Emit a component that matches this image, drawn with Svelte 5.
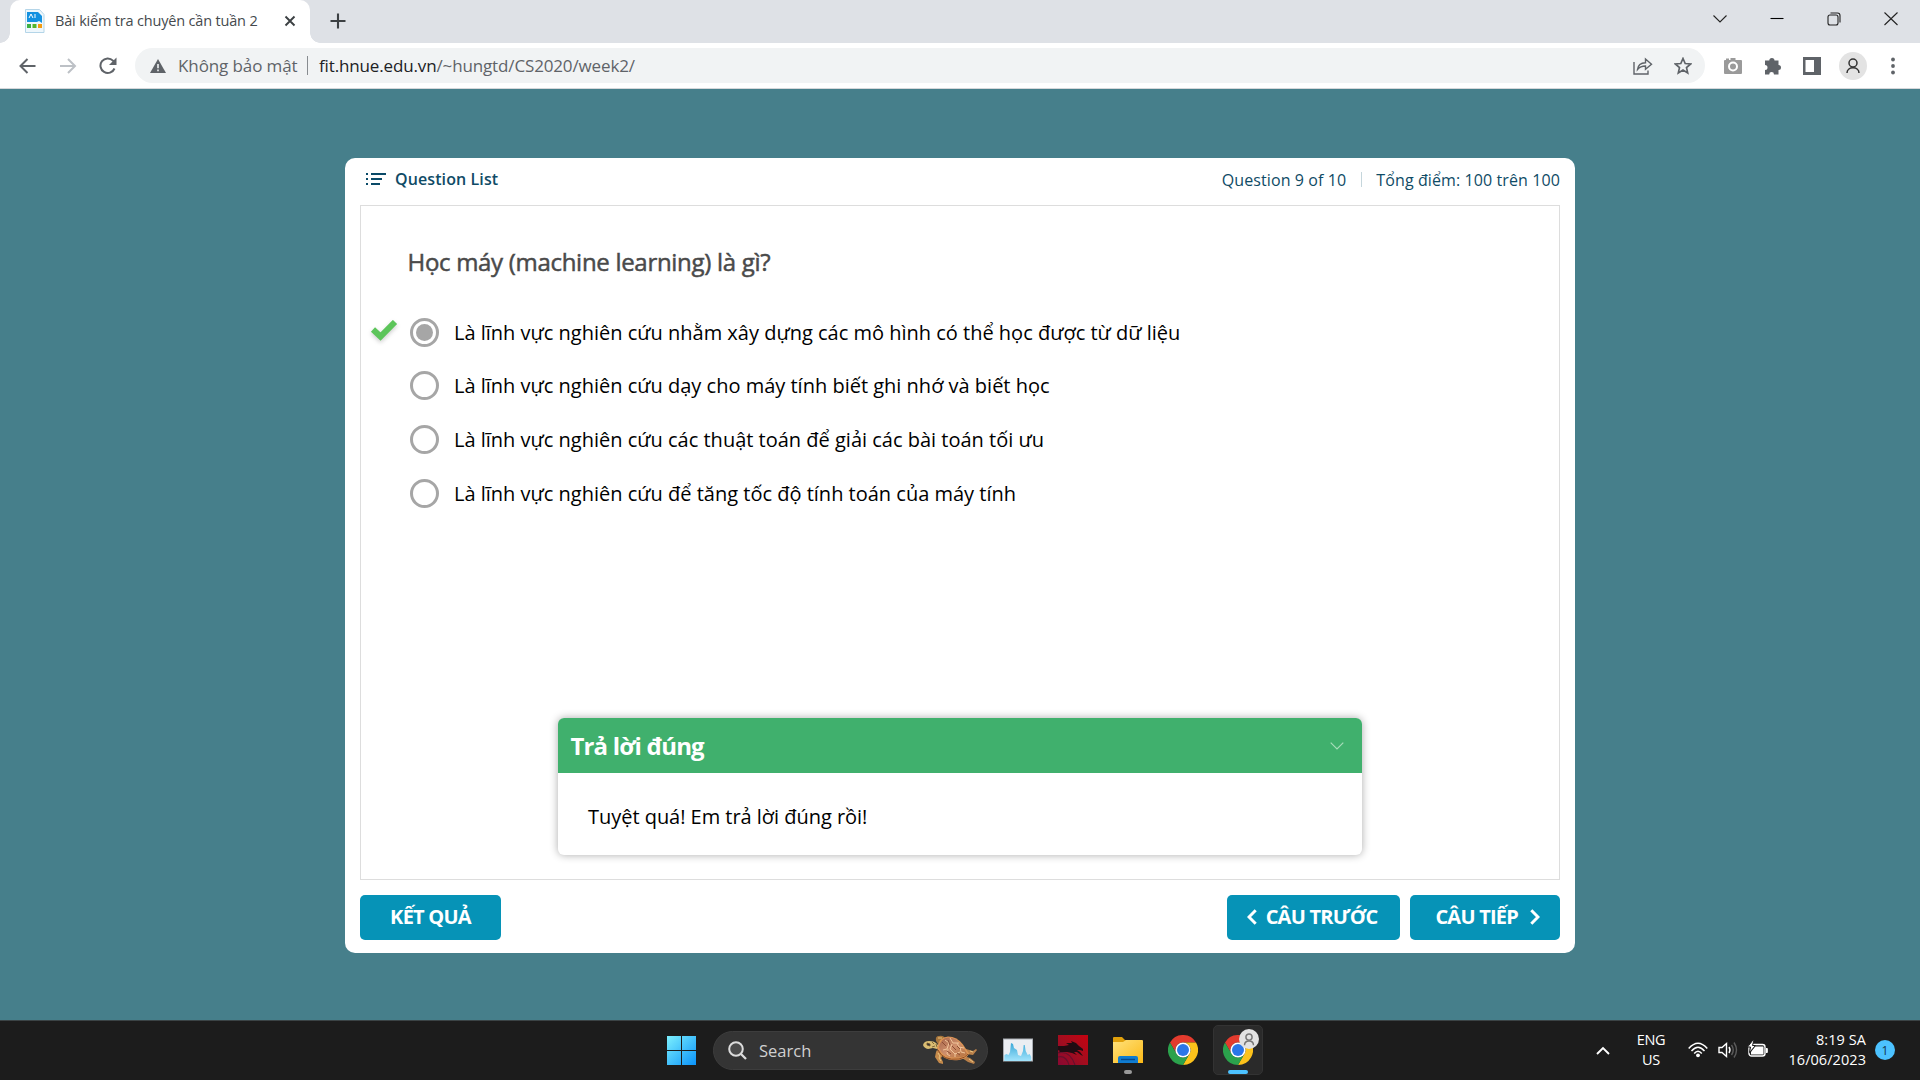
<script>
  const answers = [
    { text: 'Là lĩnh vực nghiên cứu nhằm xây dựng các mô hình có thể học được từ dữ liệu', selected: true },
    { text: 'Là lĩnh vực nghiên cứu dạy cho máy tính biết ghi nhớ và biết học', selected: false },
    { text: 'Là lĩnh vực nghiên cứu các thuật toán để giải các bài toán tối ưu', selected: false },
    { text: 'Là lĩnh vực nghiên cứu để tăng tốc độ tính toán của máy tính', selected: false }
  ];
</script>

{#snippet chrome()}
  <svg class="app-icon" width="30" height="30" viewBox="0 0 30 30">
    <path d="M2 7.5A15 15 0 0 1 28 7.5L15 7.5A7.5 7.5 0 0 0 8.5 18.75Z" fill="#e33b2e" />
    <path d="M28 7.5A15 15 0 0 1 15 30L21.5 18.75A7.5 7.5 0 0 0 15 7.5Z" fill="#fcc21b" />
    <path d="M15 30A15 15 0 0 1 2 7.5L8.5 18.75A7.5 7.5 0 0 0 21.5 18.75Z" fill="#2ba24c" />
    <circle cx="15" cy="15" r="7.6" fill="#fff" />
    <circle cx="15" cy="15" r="6" fill="#2a76e8" />
  </svg>
{/snippet}

<div class="screen">
  <header class="tabs">
    <div class="tab">
      <svg class="favicon" width="20" height="24" viewBox="0 0 20 24">
        <path d="M.5.5h14l4.500 5v18H.5z" fill="#eef7fc" stroke="#b4d5e8" />
        <path d="M2 3h11l4 4v7l-3-2-2 1H2z" fill="#1491e0" />
        <path d="M4 9l2-4 2 4M10 5v4" stroke="#fff" fill="none" />
        <path d="M2 15h4v4H2z" fill="#3cb043" />
        <path d="M7.500 15h4v4h-4z" fill="#55b52c" />
        <path d="M13 15h4v4h-4z" fill="#f39c12" />
      </svg>
      <span class="tab-title">Bài kiểm tra chuyên cần tuần 2</span>
      <svg class="tab-close" width="12" height="12" viewBox="0 0 12 12"><path d="M1.5 1.5l9 9M10.5 1.5l-9 9" stroke="#3c4043" stroke-width="1.9" /></svg>
    </div>
    <svg class="plus" width="16" height="16" viewBox="0 0 16 16"><path d="M8 .5v15M.5 8h15" stroke="#3c4043" stroke-width="2.1" /></svg>
    <div class="window-controls">
      <svg width="14" height="14" viewBox="0 0 14 14"><path d="M.5 3.5L7 10l6.5-6.5" /></svg>
      <svg width="14" height="14" viewBox="0 0 14 14"><path d="M.5 6.500h13" stroke="#000" /></svg>
      <svg width="14" height="14" viewBox="0 0 14 14"><rect x="1" y="3" width="10" height="10" rx="2" /><path d="M3.5 1h7Q13 1 13 3.5v7" /></svg>
      <svg width="14" height="14" viewBox="0 0 14 14"><path d="M.5 .5l13 12.500M13.500 .5l-13 12.500" /></svg>
    </div>
  </header>

  <div class="toolbar">
    <svg class="nav" width="18" height="16" viewBox="0 0 18 16"><path d="M16.500 8H2M8.500 1L1.500 8l7 7" stroke="#5f6368" /></svg>
    <svg class="nav" width="18" height="16" viewBox="0 0 18 16"><path d="M1 8h14.500M9 1l7 7-7 7" stroke="#bdc1c6" /></svg>
    <svg class="nav" width="18" height="18" viewBox="0 0 18 18"><path d="M15.500 11.500A7.300 7.300 0 1 1 14 3.600L16 6" stroke="#5f6368" /><path d="M17.500.5V8H10z" fill="#5f6368" stroke="none" /></svg>
    <div class="omnibox">
      <svg class="warn" width="16" height="14" viewBox="0 0 16 14"><path d="M8 0l8 14H0z" fill="#5f6368" /><path d="M8 5v4.200M8 10.500v1.700" stroke="#f1f3f4" stroke-width="1.600" /></svg>
      <span class="insecure">Không bảo mật</span>
      <span class="divider"></span>
      <span class="url"><b>fit.hnue.edu.vn</b>/~hungtd/CS2020/week2/</span>
      <svg class="share" width="20" height="18" viewBox="0 0 20 18"><path d="M1 5v12h14v-3.500M4.500 12.500C5 8 8 5.800 12.500 5.700V2L18.500 7.200l-6 5V9C9 9 6.500 10 4.500 12.500z" /></svg>
      <svg width="18" height="18" viewBox="0 0 18 18"><path d="M9 1.500l2.200 5 5.400.5-4.100 3.600 1.200 5.300L9 13.100l-4.700 2.800 1.200-5.300L1.400 7l5.400-.5z" stroke-width="1.700" /></svg>
    </div>
    <div class="extensions">
      <svg width="20" height="18" viewBox="0 0 20 18"><path d="M2 3h1V1.500h3V3h1.500V1h5v2H18q1 0 1 1v12q0 1-1 1H2q-1 0-1-1V4q0-1 1-1z" fill="#9a9a9a" /><circle cx="10" cy="9.500" r="4" fill="#9a9a9a" stroke="#fff" stroke-width="2" /></svg>
      <svg width="18" height="18" viewBox="0 0 18 18"><path d="M1 3.500h4.300a2.600 2.600 0 0 1 5.200 0H14.500V8a2.500 2.500 0 0 1 0 5v4.500H10a2.400 2.400 0 0 0-4.800 0H1V13a2.500 2.500 0 0 0 0-5z" fill="#5f6368" /></svg>
      <svg width="18" height="18" viewBox="0 0 18 18"><path d="M0 0h18v18H0zM2.500 3v12H11V3z" fill="#5f6368" fill-rule="evenodd" /></svg>
      <span class="avatar"><svg width="14" height="16" viewBox="0 0 14 16"><circle cx="7" cy="5" r="4" /><path d="M1 15c0-7 12-7 12 0" /></svg></span>
      <svg class="dots" width="4" height="18" viewBox="0 0 4 18"><circle cx="2" cy="2.500" r="1.900" /><circle cx="2" cy="9" r="1.900" /><circle cx="2" cy="15.500" r="1.900" /></svg>
    </div>
  </div>

  <main>
    <section class="quiz">
      <div class="quiz-head">
        <svg width="20" height="12" viewBox="0 0 20 12"><path d="M0 1h2M5 1h15M0 6h2M5 6h11M0 11h2M5 11h9" stroke="#0a4a68" stroke-width="2" /></svg>
        <span class="list-label">Question List</span>
        <span class="progress">Question 9 of 10</span>
        <span class="rule"></span>
        <span class="score">Tổng điểm: 100 trên 100</span>
      </div>
      <div class="slide">
        <h1>Học máy (machine learning) là gì?</h1>
        <div class="answers">
          {#each answers as answer}
            <div class="answer">
              <span class="mark">
                {#if answer.selected}
                  <svg width="28" height="22" viewBox="0 0 28 22"><path d="M3 9.500l7.500 7L25 2" fill="none" stroke="#5cc55a" stroke-width="6" /></svg>
                {/if}
              </span>
              <span class="radio" class:selected={answer.selected}></span>
              <span class="answer-text">{answer.text}</span>
            </div>
          {/each}
        </div>
        <div class="feedback">
          <div class="feedback-head">
            <span>Trả lời đúng</span>
            <svg width="14" height="8" viewBox="0 0 14 8"><path d="M.7 .7L7 7l6.300-6.300" fill="none" stroke="#a6dcb9" stroke-width="1.200" /></svg>
          </div>
          <p>Tuyệt quá! Em trả lời đúng rồi!</p>
        </div>
      </div>
      <div class="actions">
        <button class="result">KẾT QUẢ</button>
        <button class="prev"><svg width="10" height="16" viewBox="0 0 10 16"><path d="M8.700 1.300L2 8l6.700 6.700" /></svg><span>CÂU TRƯỚC</span></button>
        <button class="next"><span>CÂU TIẾP</span><svg width="10" height="16" viewBox="0 0 10 16"><path d="M1.300 1.300L8 8l-6.700 6.700" /></svg></button>
      </div>
    </section>
  </main>

  <footer class="taskbar">
    <div class="apps">
      <svg class="start" width="29" height="29" viewBox="0 0 29 29">
        <defs><linearGradient id="win" gradientUnits="userSpaceOnUse" x1="0" y1="0" x2="29" y2="29"><stop offset="0" stop-color="#7df0fd" /><stop offset="1" stop-color="#0a93fa" /></linearGradient></defs>
        <path d="M0 0h14v14H0zM15 0h14v14H15zM0 15h14v14H0zM15 15h14v14H15z" fill="url(#win)" />
      </svg>
      <div class="search">
        <svg width="19" height="19" viewBox="0 0 19 19"><circle cx="8" cy="8" r="6.800" fill="#4b4b4b" stroke="#dcdcdc" stroke-width="2" /><path d="M13 13l5 5" stroke="#dcdcdc" stroke-width="2.300" /></svg>
        <span>Search</span>
        <svg class="turtle" width="54" height="30" viewBox="0 0 54 30">
          <defs><linearGradient id="shell" x1="0" y1="0" x2="1" y2="1"><stop offset="0" stop-color="#a5654a" /><stop offset=".5" stop-color="#cf8f6c" /><stop offset="1" stop-color="#b5723c" /></linearGradient></defs>
          <path d="M13 6Q12 1 16 1q4-1 6 2l-4 4-3 2z" fill="#a8763c" />
          <path d="M14 15l6 5-2 3 2 4 0 2-4-1-4-6 1-5z" fill="#c58a4b" />
          <path d="M43 14l7 2 3-2 1 1-4 5-7-1zM41 21l6 2 5 4-1 2-6-2-6-4z" fill="#b9804a" />
          <path d="M0 10Q1 6 6 6q5 0 7 2l3 3-2 3-4-1-5 1Q1 13 0 10z" fill="#d9bd73" />
          <path d="M4 8l3 1v2l-3-1zM9 7l2 2M9 12l3-1M13 9l1 3" fill="#2d3038" stroke="#6b5128" stroke-width=".8" />
          <path d="M14 13Q16 2 25 1.500q9 0 15 8 4 6 6 9-2 5-10 6.500-17 2-22-12z" fill="#dd9555" />
          <path d="M16 12Q18 3 25 2.500q9 0 14 8l5 8q-3 4-9 4-16 1-19-10.500z" fill="url(#shell)" />
          <path d="M22 5l4 3-2 6-4 1M27 3l3 5 6 0M29 9l-2 5 5 5 5-2M34 8l2 4 5 1M25 14l-1 5 3 2M37 12l1 5 4 1M32 18v4" fill="none" stroke="#f0c499" stroke-width="1" />
          <path d="M19 7l4 4M25 5l2 5M29 11l4 4M34 11l3 3M24 16l4 3M34 18l3 2" stroke="#8c4d34" stroke-width="1" />
          <path d="M15 15q5 11 21 9 6-1 9-5" fill="none" stroke="#914e24" stroke-width="1" />
          <path d="M15 18l2 3-1 2 2 3M47 16l3 1M46 24l4 3M15 3l4 0" stroke="#eccb84" stroke-width=".9" fill="none" />
        </svg>
      </div>
      <svg class="app-icon monitor" width="30" height="24" viewBox="0 0 30 24">
        <defs><linearGradient id="wave" x1="0" y1="0" x2="0" y2="1"><stop offset="0" stop-color="#3ba9d8" /><stop offset="1" stop-color="#a3e4fc" /></linearGradient></defs>
        <rect x=".5" y="1" width="29" height="22" fill="#ebeef2" stroke="#a9adb3" />
        <path d="M1.500 17l2-1 2 1L7 14l1-9 2 1 1 4 3 2 1 5 3 1 2-5 .7-6h1l1 6 2 4 2-1 1.500 3v4h-27z" fill="url(#wave)" />
      </svg>
      <svg class="app-icon" width="30" height="30" viewBox="0 0 30 30">
        <defs><linearGradient id="red" x1="0" y1="1" x2="1" y2="0"><stop offset="0" stop-color="#870832" /><stop offset=".5" stop-color="#a40d1e" /><stop offset="1" stop-color="#c50210" /></linearGradient></defs>
        <path d="M0 0h30v30H0z" fill="url(#red)" />
        <path d="M0 11l6 0 5-1-3-2 6 0-1-2 5 2 3 3 4 3 0 2-3-1-3 0 3 2 3 4-2-1-4-3-3 0 3 3-5-2-5-1-4 0-5 1 2-2-2-1z" fill="#200c12" />
        <path d="M0 18q12-3 17 12M0 22q8-2 11 8" fill="none" stroke="#64112d" stroke-width="1.200" />
      </svg>
      <div class="app">
        <svg class="app-icon" width="30" height="28" viewBox="0 0 30 28">
          <defs><linearGradient id="folder" x1="0" y1="0" x2="1" y2="1"><stop offset="0" stop-color="#ffe27c" /><stop offset="1" stop-color="#fcb916" /></linearGradient></defs>
          <path d="M0 2q0-1 1-1h8l3 3h17v8H0z" fill="#e0a00b" />
          <path d="M0 6h10l3-2h16q1 0 1 1v22H0z" fill="url(#folder)" />
          <path d="M5 27v-5q0-2 2-2h16q2 0 2 2v5z" fill="#107cd0" />
          <path d="M8 23.500h14" stroke="#07498c" stroke-width="1.400" />
        </svg>
        <span class="indicator"></span>
      </div>
      {@render chrome()}
      <div class="app active">
        {@render chrome()}
        <span class="profile"><svg width="12" height="13" viewBox="0 0 14 16"><circle cx="7" cy="5" r="3.800" /><path d="M1.500 15c0-7 11-7 11 0" /></svg></span>
        <span class="indicator"></span>
      </div>
    </div>
    <div class="tray">
      <svg class="up" width="14" height="9" viewBox="0 0 14 9"><path d="M1 8l6-6 6 6" fill="none" stroke="#fff" stroke-width="1.900" /></svg>
      <div class="lang"><span>ENG</span><span>US</span></div>
      <svg class="wifi" width="20" height="16" viewBox="0 0 20 16"><g fill="none" stroke="#fff" stroke-width="1.500"><path d="M.7 6.500Q10-4 19.300 6.500" /><path d="M3.500 9Q10 1.300 16.500 9" /><path d="M6.200 11.500Q10 7 13.800 11.500" /></g><circle cx="10" cy="13.300" r="1.900" fill="#fff" /></svg>
      <svg class="volume" width="20" height="18" viewBox="0 0 20 18"><g fill="none" stroke="#fff" stroke-width="1.400"><path d="M1 6.500h3L8.500 2.500v13L4 11.500H1z" /><path d="M11 6q2 3 0 6" /><path d="M13.500 4q3.500 5 0 10M16 1.500q5 7.500 0 15" stroke="#5c5c5c" /></g></svg>
      <svg class="battery" width="20" height="18" viewBox="0 0 20 18"><rect x="1" y="3.500" width="16" height="11.500" rx="2.500" fill="none" stroke="#fff" stroke-width="1.400" /><path d="M7 5.500h8.500v8H3V11z" fill="#fff" /><path d="M18 7.500h1.300v4H18" stroke="#fff" fill="#fff" /><path d="M5-1L-.5 6h3l-1 5.500 6-7H4.500l1.500-5.500z" fill="#fff" stroke="#1c1c1c" stroke-width="1" /></svg>
      <div class="clock"><span>8:19 SA</span><span>16/06/2023</span></div>
      <span class="count">1</span>
    </div>
  </footer>
</div>

<style>
  :global(body) { margin: 0; }
  .screen { width: 1920px; height: 1080px; display: flex; flex-direction: column; overflow: hidden; font-family: "Open Sans", "Noto Sans", sans-serif; background: #467f8b; box-sizing: border-box; }
  .screen *, .screen *::before { box-sizing: border-box; }
  svg { display: block; flex: none; }
  span { white-space: nowrap; }

  .tabs { height: 43px; background: #dee1e6; display: flex; align-items: center; padding-left: 10px; flex: none; }
  .tab { width: 300px; height: 43px; background: #fff; border-radius: 10px 10px 0 0; display: flex; align-items: center; padding: 0 14px 2px 15px; position: relative; }
  .tab::before { content: ""; position: absolute; left: -10px; right: -10px; bottom: 0; height: 10px; background: radial-gradient(circle at 0 0, #0000 9.500px, #fff 10px) left / 10px 10px no-repeat, radial-gradient(circle at 100% 0, #0000 9.500px, #fff 10px) right / 10px 10px no-repeat; }
  .favicon { margin-right: 10px; }
  .tab-title { font-size: 14.500px; width: 203px; letter-spacing: -.18px; color: #45494d; }
  .tab-close { margin-left: auto; }
  .plus { margin-left: 19.500px; margin-bottom: 1px; }
  .window-controls { margin-left: auto; margin-bottom: 6px; padding-right: 22px; display: flex; gap: 43px; }
  .window-controls svg { fill: none; stroke: #222; stroke-width: 1.100; }

  .toolbar { height: 46px; background: #fff; border-bottom: 1px solid #d5d7da; display: flex; align-items: center; flex: none; padding-left: 19px; }
  .nav { margin-right: 22px; fill: none; stroke-width: 2; }
  .omnibox { width: 1570px; height: 35px; border-radius: 18px; background: #f1f3f4; display: flex; align-items: center; padding: 0 13px 0 15px; color: #5f6368; font-size: 17px; margin-left: -4px; }
  .insecure { margin-left: 12px; width: 120px; letter-spacing: -.1px; }
  .divider { width: 1px; height: 19px; background: #888c90; margin: 0 11px 0 9px; }
  .url { letter-spacing: -.14px; }
  .url b { font-weight: 400; color: #202124; }
  .omnibox .share, .omnibox .share + svg { fill: none; stroke: #5f6368; }
  .share { margin-left: auto; margin-right: 21px; stroke-width: 1.400; }
  .extensions { display: flex; align-items: center; padding-left: 17.500px; }
  .extensions > * { margin-right: 21px; }
  .avatar { width: 28px; height: 28px; border-radius: 50%; background: #e3e3e3; display: grid; place-items: center; margin-left: -2.500px; }
  .avatar svg { fill: none; stroke: #333; stroke-width: 1.500; }
  .dots { fill: #5f6368; margin-left: 2.500px; }

  main { flex: 1; min-height: 0; padding: 69px 345px 0; }
  .quiz { width: 1230px; height: 795px; background: #fff; border-radius: 10px; padding: 0 15px; }
  .quiz-head { height: 47px; display: flex; align-items: center; color: #0f4b66; padding: 0 0 5px 6px; font-size: 16px; }
  .list-label { font-weight: 600; margin-left: 9px; letter-spacing: .1px; }
  .progress { margin-left: auto; }
  .progress, .score { letter-spacing: .1px; padding-top: 2px; }
  .rule { width: 1px; height: 15px; background: #c5d6dc; margin: 0 14.500px; }
  .slide { height: 675px; border: 1px solid #ddd; display: flex; flex-direction: column; }
  h1 { margin: 38px 0 0 46.500px; font-size: 24px; line-height: 36px; font-weight: 400; color: #4a4a4a; letter-spacing: -.3px; -webkit-text-stroke: .5px #4a4a4a; }
  .answers { margin-top: 25.200px; display: flex; flex-direction: column; }
  .answer { height: 53.700px; display: flex; align-items: center; padding-left: 9px; }
  .mark { width: 28px; height: 25px; margin-right: 12px; filter: drop-shadow(0 2px 2px #0003); }
  .radio { width: 29px; height: 29px; border: 3px solid #a6a6a6; border-radius: 50%; margin-right: 15px; display: grid; place-items: center; }
  .selected::before { content: ""; width: 17px; height: 17px; border-radius: 50%; background: #a6a6a6; }
  .answer-text { font-size: 20px; color: #000; }
  .feedback { width: 804px; height: 137px; margin: auto auto 24px 197px; border-radius: 6px; overflow: hidden; box-shadow: 0 0 8px #0005; flex: none; }
  .feedback-head { height: 55px; background: #40b06d; color: #fff; display: flex; align-items: center; justify-content: space-between; padding: 0 18px 0 12.500px; font-size: 24px; font-weight: 700; letter-spacing: -.84px; }
  p { margin: 0; padding: 29px 30px 0; font-size: 20px; line-height: 30px; color: #000; letter-spacing: -.03px; }
  .actions { display: flex; gap: 10px; padding-top: 15px; }
  button { height: 45px; border: 0; border-radius: 5px; background: #0693b7; color: #fff; font: 700 20px "Open Sans", sans-serif; letter-spacing: -.76px; display: flex; align-items: center; justify-content: center; padding: 0 0 2px; }
  button svg { fill: none; stroke: #fff; stroke-width: 3; margin-top: 1px; }
  .result { width: 141px; margin-right: auto; }
  .prev { width: 173px; gap: 9px; padding-right: 3px; }
  .next { width: 150px; gap: 11.500px; padding-left: 5px; }

  .taskbar { height: 60px; background: #1c1c1c; border-top: 1px solid #3b4345; display: flex; align-items: center; flex: none; padding: 0 0 1px 667px; color: #fff; }
  .apps { display: flex; align-items: center; }
  .search { width: 275px; height: 39px; margin: 0 15px 0 17px; border-radius: 20px; background: #343434; border: 1px solid #3d3d3d; display: flex; align-items: center; padding: 0 10px 0 14px; color: #d0d0d0; font-size: 16.500px; }
  .search span { margin-left: 12px; }
  .turtle { margin-left: auto; }
  .apps > .app-icon, .app { margin-right: 25px; }
  .app { width: 30px; height: 50px; position: relative; display: grid; place-items: center; }
  .indicator { position: absolute; bottom: 1px; left: 11px; width: 8px; height: 4px; border-radius: 2px; background: #999; }
  .apps > .app-icon:nth-last-child(2) { margin-right: 15px; }
  .active { width: 50px; background: #2a2a2a; border: 1px solid #333; border-radius: 5px; }
  .active .indicator { left: 14px; bottom: 0; width: 20px; background: #4cc2ff; }
  .profile { position: absolute; left: 25px; top: 3px; width: 20px; height: 20px; border-radius: 50%; background: #e2e2e2; display: grid; place-items: center; }
  .profile svg { fill: none; stroke: #777; stroke-width: 1.800; }
  .tray { margin-left: auto; display: flex; align-items: center; padding-right: 25px; }
  .battery { overflow: visible; }
  .lang, .clock { display: flex; flex-direction: column; font-size: 14.500px; line-height: 20px; letter-spacing: -.3px; }
  .lang { width: 34px; align-items: center; margin: 0 20px 0 24px; }
  .wifi { margin-right: 10px; }
  .volume { margin-right: 10px; }
  .clock { width: 82px; align-items: flex-end; margin: 0 9px 1px 16px; letter-spacing: .06px; }
  .count { width: 20px; height: 20px; border-radius: 50%; background: #4cc2ff; color: #12384d; font-size: 12px; display: grid; place-items: center; }
</style>
